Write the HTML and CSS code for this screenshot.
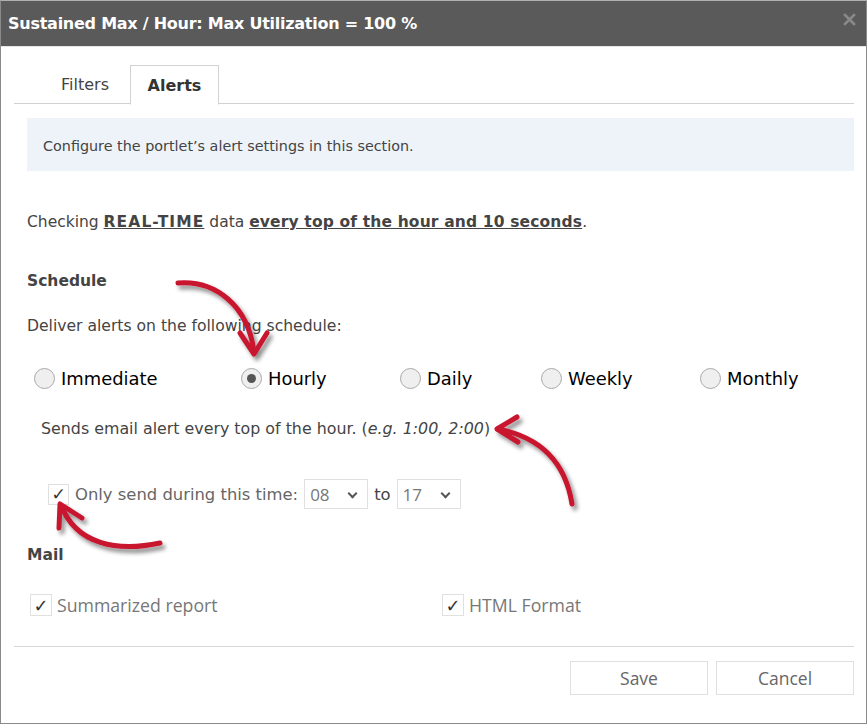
FILE: index.html
```html
<!DOCTYPE html>
<html>
<head>
<meta charset="utf-8">
<link rel="stylesheet" href="styles.css">
</head>
<body>
<div class="dialog">
  <div class="titlebar">
    <span class="title">Sustained Max / Hour: Max Utilization = 100 %</span>
    <svg class="close" width="13" height="13" viewBox="0 0 13 13"><path d="M2,2 L11,11 M11,2 L2,11" stroke="#8a8a8a" stroke-width="2.6" stroke-linecap="square"/></svg>
  </div>
  <div class="body">
    <div class="tabs">
      <div class="tab">Filters</div>
      <div class="tab active">Alerts</div>
    </div>
    <div class="content">
      <div class="info">Configure the portlet’s alert settings in this section.</div>
      <p class="checking">Checking <b class="rt"><u>REAL-TIME</u></b> data <b class="ev"><u>every top of the hour and 10 seconds</u></b>.</p>
      <h3 class="heading">Schedule</h3>
      <p class="deliver">Deliver alerts on the following schedule:</p>
      <div class="radios">
        <label class="radio r1"><span class="dot"></span>Immediate</label>
        <label class="radio r2"><span class="dot on"></span>Hourly</label>
        <label class="radio r3"><span class="dot"></span>Daily</label>
        <label class="radio r4"><span class="dot"></span>Weekly</label>
        <label class="radio r5"><span class="dot"></span>Monthly</label>
      </div>
      <p class="sends">Sends email alert every top of the hour. (<i>e.g. 1:00, 2:00</i>)</p>
      <div class="only">
        <span class="cb">✓</span>
        <span class="only-label">Only send during this time:</span>
        <span class="select">08<span class="chev"></span></span>
        <span class="to">to</span>
        <span class="select">17<span class="chev"></span></span>
      </div>
      <h3 class="heading mail">Mail</h3>
      <div class="mailrow">
        <label class="mailopt"><span class="cb small">✓</span>Summarized report</label>
        <label class="mailopt"><span class="cb small">✓</span>HTML Format</label>
      </div>
    </div>
    <div class="footer">
      <button class="btn">Save</button>
      <button class="btn">Cancel</button>
    </div>
  </div>
  <svg class="arrows" width="867" height="724" viewBox="0 0 867 724">
    <defs>
      <filter id="sh" x="-20%" y="-20%" width="140%" height="140%">
        <feGaussianBlur in="SourceAlpha" stdDeviation="2"/>
        <feOffset dx="3" dy="4" result="b"/>
        <feComponentTransfer><feFuncA type="linear" slope="0.45"/></feComponentTransfer>
        <feMerge><feMergeNode/><feMergeNode in="SourceGraphic"/></feMerge>
      </filter>
    </defs>
    <g fill="none" stroke="#c8142f" stroke-width="5" stroke-linecap="round" stroke-linejoin="round" filter="url(#sh)">
      <path d="M178,283 C215,280 248,305 254,352"/>
      <path d="M240,333 L254,354 L267,333"/>
      <path d="M572,504 C566,466 545,438 498,429"/>
      <path d="M517,417 L497,429 L518,442"/>
      <path d="M160,543 C118,552 76,545 61,505"/>
      <path d="M82,518 L60,504 L59,528"/>
    </g>
  </svg>
</div>
</body>
</html>
```
FILE: styles.css
```css
* { box-sizing: border-box; }
html, body { margin: 0; padding: 0; background: #fff; }
body { font-family: "DejaVu Sans", Verdana, sans-serif; color: #444; }
.dialog {
  position: relative;
  width: 867px;
  height: 724px;
  border: 1px solid #8a8a8a;
  border-top-color: #b0b0b0;
  background: #fff;
  overflow: hidden;
}
.titlebar {
  height: 46px;
  background: #5a5a5a;
  display: flex;
  align-items: center;
  justify-content: space-between;
  padding: 0 10px 0 7px;
  border-bottom: 1px solid #e6e6e6;
}
.title { color: #fff; font-weight: bold; font-size: 16px; letter-spacing: -0.25px; }
.close { margin-top: -8px; }
.body { padding: 0 12px 0 13px; }
.tabs {
  display: flex;
  margin-top: 18px;
  border-bottom: 1px solid #d2d2d2;
  height: 39px;
}
.tab {
  font-size: 16px;
  color: #444;
  padding: 10px 0 0;
  text-align: center;
  width: 89px;
}
.tabs .tab:first-child { padding-left: 47px; width: 116px; text-align: left; }
.tab.active {
  font-weight: bold;
  color: #333;
  border: 1px solid #d2d2d2;
  border-bottom: 1px solid #fff;
  background: #fff;
  height: 40px;
  margin-bottom: -1px;
}
.content { padding: 14px 0 0 13px; }
.info {
  background: #eef3fa;
  height: 53px;
  display: flex;
  align-items: center;
  padding-left: 16px;
  padding-top: 2px;
  font-size: 14.35px;
  color: #444;
}
.checking { margin: 38px 0 0; font-size: 15.5px; line-height: 27px; }
.checking b { color: #444; }
.checking .rt { letter-spacing: 1.1px; }
.checking .ev { letter-spacing: 0.15px; }
.heading { margin: 35px 0 0; font-size: 15.5px; line-height: 20px; color: #444; font-weight: bold; }
.deliver { margin: 25px 0 0; font-size: 15.6px; line-height: 20px; }
.radios { display: flex; margin-top: 29px; padding-left: 7px; height: 26px; align-items: center; }
.radio { display: flex; align-items: center; font-size: 17.9px; color: #000; }
.r1 { width: 207px; }
.r2 { width: 159px; }
.r3 { width: 141px; }
.r4 { width: 159px; }
.dot {
  width: 21px; height: 21px;
  border-radius: 50%;
  border: 1px solid #a8a8a8;
  background: #efefef;
  margin-right: 6px;
  position: relative;
}
.dot.on::after {
  content: "";
  position: absolute;
  left: 5px; top: 5px;
  width: 9px; height: 9px;
  border-radius: 50%;
  background: #555;
}
.sends { margin: 28px 0 0 14px; font-size: 15.85px; line-height: 20px; }
.only { display: flex; align-items: center; margin: 40px 0 0 21px; font-size: 16.4px; color: #666; height: 30px; }
.cb {
  width: 21px; height: 21px;
  border: 1px solid #e0e0e0;
  display: inline-flex; align-items: center; justify-content: center;
  color: #333; font-size: 17px; font-family: "DejaVu Sans", sans-serif;
  margin-right: 6px;
  background: #fff;
}
.only-label { margin-right: 6px; }
.select {
  width: 64px; height: 30px;
  border: 1px solid #e0e0e0;
  display: inline-flex; align-items: center;
  padding-left: 5px;
  position: relative;
  color: #777;
  font-family: "Open Sans", sans-serif;
  font-size: 17px;
}
.chev {
  position: absolute;
  right: 11px; top: 10px;
  width: 7px; height: 7px;
  border-right: 2px solid #555;
  border-bottom: 2px solid #555;
  transform: rotate(45deg);
}
.to { margin: 0 6px; color: #444; }
.mail { margin-top: 36px; }
.mailrow { display: flex; margin-top: 28px; margin-left: 3px; }
.mailopt {
  display: flex; align-items: center;
  font-family: "Open Sans", sans-serif;
  font-size: 17.7px; color: #777;
  width: 414px;
}
.cb.small { width: 22px; height: 22px; font-size: 18px; margin-right: 5px; }
.footer {
  margin-top: 29px;
  border-top: 1px solid #d6d6d6;
  padding-top: 14px;
  display: flex;
  justify-content: flex-end;
  gap: 8px;
}
.btn {
  width: 138px; height: 34px;
  border: 1px solid #e0e0e0;
  background: #fff;
  font-family: "Open Sans", sans-serif;
  font-size: 17.5px;
  color: #666;
}
.arrows { position: absolute; left: -1px; top: -1px; pointer-events: none; }
```
